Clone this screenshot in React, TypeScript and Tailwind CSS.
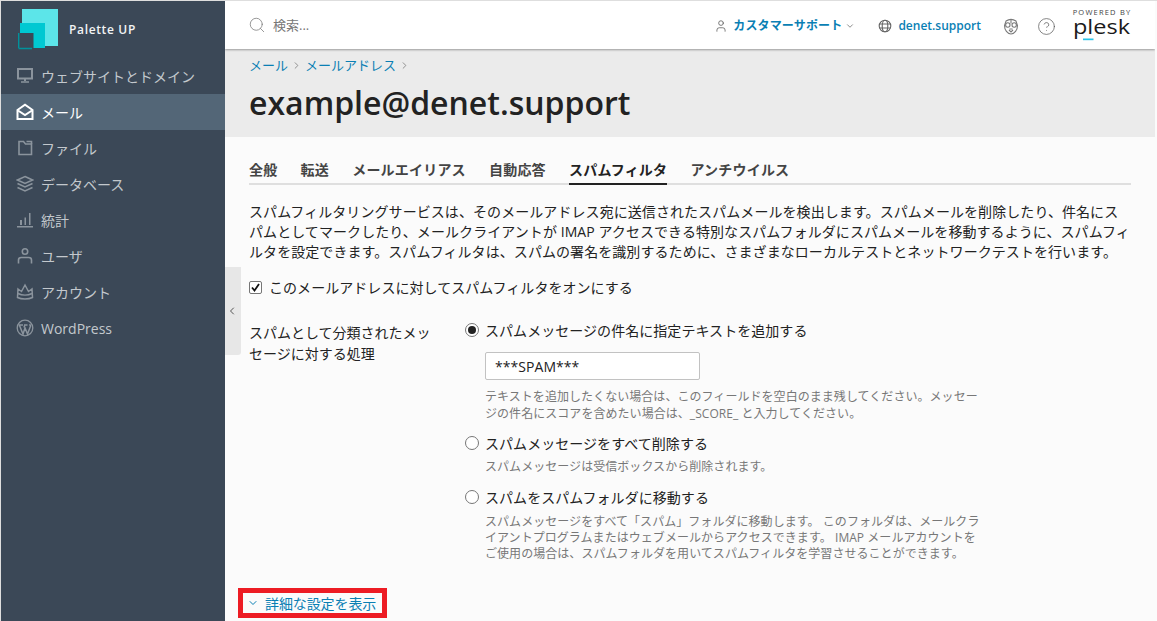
import React from 'react';
import { ChevronDown, ChevronLeft, ChevronRight, CircleHelp, Search, User } from 'lucide-react';

const FONT = { fontFamily: '"Open Sans", "Noto Sans CJK JP", sans-serif' };

const IconMonitor = () => (
  <svg width="18" height="18" viewBox="0 0 18 18" fill="none" stroke="currentColor" strokeWidth="2">
    <rect x="2" y="2" width="14" height="9.500" />
    <path d="M9 12v2" />
    <path d="M5 15h8" strokeWidth="1.500" />
  </svg>
);
const IconMail = () => (
  <svg width="18" height="18" viewBox="0 0 18 18" fill="none" stroke="currentColor" strokeWidth="2">
    <path d="M1.500 7 9 1.800 16.500 7v9h-15z" />
    <path d="m2 7.500 7 4.500 7-4.500" />
  </svg>
);
const IconFolder = () => (
  <svg width="18" height="18" viewBox="0 0 18 18" fill="none" stroke="currentColor" strokeWidth="1.600">
    <path d="M3 2.500h4.500l2 2.500H15.500v10.500H3z" />
    <path d="M10.500 2.500h5v2.500" />
  </svg>
);
const IconStack = () => (
  <svg width="18" height="18" viewBox="0 0 18 18" fill="none" stroke="currentColor" strokeWidth="1.500">
    <path d="M9 1.500 16.500 5 9 8.500 1.500 5z" />
    <path d="M1.500 8.500 9 12l7.500-3.500M1.500 12.500 9 16l7.500-3.500" />
  </svg>
);
const IconBars = () => (
  <svg width="18" height="18" viewBox="0 0 18 18" fill="currentColor">
    <rect x="1" y="15" width="16" height="1.500" />
    <rect x="4" y="9" width="2" height="5" />
    <rect x="8.500" y="6.500" width="1.500" height="7.500" />
    <rect x="13" y="2" width="1.500" height="12" />
  </svg>
);
const IconPerson = () => (
  <svg width="18" height="18" viewBox="0 0 18 18" fill="none" stroke="currentColor" strokeWidth="1.600">
    <circle cx="9" cy="4.500" r="2.700" />
    <path d="M2.500 16.500v-3.500c0-1.500 1.200-2.500 2.800-2.500h7.400c1.600 0 2.800 1 2.800 2.500v3.500" />
  </svg>
);
const IconCrown = () => (
  <svg width="18" height="18" viewBox="0 0 18 18" fill="none" stroke="currentColor" strokeWidth="1.500">
    <path d="M2 6 5.500 8.500 9 2l3.500 6.500L16 6l.5 8.500c-4 2-11 2-15 0z" />
    <path d="M2 10.500c4 2 10 2 14 0" />
  </svg>
);
const IconWordpress = () => (
  <svg width="18" height="18" viewBox="0 0 18 18" fill="none" stroke="currentColor">
    <circle cx="9" cy="9" r="7.800" strokeWidth="1.300" />
    <path d="M3.500 6.500 7 15l2-6 2.500 6 2.700-7c.5-1.400-.1-2.200-.9-2.500M2.800 6h4.200M8 6h3.500M8.800 6 8 8.500" strokeWidth="1.500" />
  </svg>
);
const IconGlobe = () => (
  <svg width="14" height="14" viewBox="0 0 14 14" fill="none" stroke="currentColor" strokeWidth="1.100">
    <circle cx="7" cy="7" r="5.800" />
    <ellipse cx="7" cy="7" rx="2.800" ry="5.800" />
    <path d="M1.500 5h11M1.500 9h11" />
  </svg>
);
const IconBadger = () => (
  <svg width="16" height="17" viewBox="0 0 16 17" fill="none" stroke="#7a7a7a" strokeWidth="1.100">
    <path d="M3 3c3-2 7-2 10 0l1.500 4.500c0 4.500-3 8.500-6.500 8.500S1.500 12 1.500 7.500z" />
    <circle cx="4.800" cy="7" r="2.200" />
    <circle cx="11.200" cy="7" r="2.200" />
    <path d="M8 2v3.500M6 12l2 2 2-2M6.500 11h3" />
  </svg>
);
const PleskLogo = () => (
  <svg width="60" height="36" viewBox="0 0 60 36" className="block">
    <text x="30" y="7.500" textAnchor="middle" fontSize="7.500" letterSpacing="1.200" fill="#444" fontFamily="Open Sans, sans-serif">POWERED BY</text>
    <text x="1" y="27" fontSize="20" fill="#1a1a1a" textLength="57" lengthAdjust="spacingAndGlyphs" fontFamily="Open Sans, sans-serif">plesk</text>
    <rect x="11" y="31.500" width="10.500" height="1.700" fill="#28c4e8" />
  </svg>
);

const navItems = [
  { label: 'ウェブサイトとドメイン', icon: <IconMonitor /> },
  { label: 'メール', icon: <IconMail />, active: true },
  { label: 'ファイル', icon: <IconFolder /> },
  { label: 'データベース', icon: <IconStack /> },
  { label: '統計', icon: <IconBars /> },
  { label: 'ユーザ', icon: <IconPerson /> },
  { label: 'アカウント', icon: <IconCrown /> },
  { label: 'WordPress', icon: <IconWordpress /> },
];

const tabs = ['全般', '転送', 'メールエイリアス', '自動応答', 'スパムフィルタ', 'アンチウイルス'];

const Radio = ({ checked }: { checked?: boolean }) => (
  <span className="flex h-[14px] w-[14px] shrink-0 items-center justify-center rounded-full border border-[#767676] bg-white">
    {checked && <span className="h-[8px] w-[8px] rounded-full bg-[#222]" />}
  </span>
);

const Sidebar = () => (
  <aside className="flex w-[224px] shrink-0 flex-col bg-[#3b4857]">
    <div className="flex h-[57px] items-start pl-[17px] pt-[7px]">
      <svg width="42" height="42" viewBox="0 0 42 42">
        <rect x="4" y="1" width="36" height="37" fill="#5ce5e9" />
        <rect x="2" y="15" width="25" height="25" fill="#00c8d2" />
        <rect x="0.500" y="25" width="15" height="16" fill="#3b4857" />
        <path d="M0.700 40V25M0.500 40.500H14" stroke="#00929c" strokeWidth="1.400" fill="none" />
      </svg>
      <span className="ml-[9px] mt-[13px] text-[12px] leading-[18px] font-semibold tracking-[0.65px] text-[#f2f4f5]">Palette UP</span>
    </div>
    <nav className="flex flex-col">
      {navItems.map(item => (
        <div
          key={item.label}
          className={`flex h-9 items-center pl-[15px] text-[14px] ${item.active ? 'bg-[#536677] text-white' : 'text-[#c3c8cd]'}`}
        >
          <span className={`mr-[7px] ${item.active ? 'text-white' : 'text-[#8b949d]'}`}>{item.icon}</span>
          {item.label}
        </div>
      ))}
    </nav>
  </aside>
);

const Header = () => (
  <header className="relative z-10 flex h-[48px] shrink-0 items-center bg-white pl-[23px] pr-[23px] pt-[2px] shadow-[0_1px_2px_rgba(0,0,0,0.35)]">
    <Search size={18} strokeWidth={1} className="-mt-[2px] text-[#777]" />
    <span className="ml-[7px] text-[13px] text-[#777]">検索...</span>
    <div className="ml-auto flex items-center">
      <User size={14} strokeWidth={1.300} className="text-[#555]" />
      <span className="ml-[5px] text-[12px] font-semibold tracking-[0.15px] text-[#0a7fb4]">カスタマーサポート</span>
      <ChevronDown size={10} className="ml-[3px] text-[#777]" />
      <span className="ml-[23px] text-[#666]"><IconGlobe /></span>
      <span className="ml-[6px] text-[12px] font-semibold text-[#0a7fb4]">denet.support</span>
      <span className="ml-[22px]"><IconBadger /></span>
      <CircleHelp size={19} strokeWidth={0.900} className="ml-[18px] text-[#555]" />
      <div className="-mt-[2px] ml-[16px]">
        <PleskLogo />
      </div>
    </div>
  </header>
);

const PageTitle = () => (
  <div className="h-[88px] shrink-0 bg-[#ebebeb] pl-[24px]">
    <div className="flex items-center pt-[6px] text-[13px] leading-[20px] text-[#0a7fb4]">
      <span>メール</span>
      <ChevronRight size={11} className="mx-[3px] text-[#888]" />
      <span>メールアドレス</span>
      <ChevronRight size={11} className="ml-[3px] text-[#888]" />
    </div>
    <h1 className="mt-[6px] text-[32px] leading-[44px] font-semibold text-[#222]">example@denet.support</h1>
  </div>
);

const Content = () => (
  <main className="relative flex-1 bg-[#fbfbfb] pl-[24px] pr-[24px]">
    <div className="mt-[22px] flex h-[26px] gap-[23.2px] border-b-2 border-[#dfdfdf] text-[14px] font-semibold tracking-[0.2px] text-[#444]">
      {tabs.map(tab => (
        <span
          key={tab}
          className={`-mb-[2px] h-[26px] leading-[22px] ${tab === 'スパムフィルタ' ? 'border-b-2 border-[#222] text-[#222]' : ''}`}
        >
          {tab}
        </span>
      ))}
    </div>
    <p className="mt-[17px] text-[14px] leading-[20px] tracking-[0.07px] text-[#222]">
      スパムフィルタリングサービスは、そのメールアドレス宛に送信されたスパムメールを検出します。スパムメールを削除したり、件名にスパムとしてマークしたり、メールクライアントが IMAP アクセスできる特別なスパムフォルダにスパムメールを移動するように、スパムフィルタを設定できます。スパムフィルタは、スパムの署名を識別するために、さまざまなローカルテストとネットワークテストを行います。
    </p>
    <label className="mt-[15px] flex h-[20px] items-center text-[14px] tracking-[0.05px] text-[#222]">
      <span className="flex h-[13px] w-[13px] items-center justify-center rounded-[2px] border border-[#767676] bg-white">
        <svg width="9" height="9" viewBox="0 0 9 9" fill="none" stroke="#111" strokeWidth="1.800">
          <path d="M1 4.500 3.500 7.500 8 1" />
        </svg>
      </span>
      <span className="ml-[7px]">このメールアドレスに対してスパムフィルタをオンにする</span>
    </label>
    <div className="mt-[23px] flex">
      <div className="w-[216px] shrink-0 pr-[29px] pt-[2px] text-[14px] leading-[21px] text-[#222]">
        スパムとして分類されたメッセージに対する処理
      </div>
      <div className="w-[516px] text-[14px] tracking-[0.05px] text-[#222]">
        <div className="flex h-[20px] items-center gap-[6px]">
          <Radio checked />
          <span>スパムメッセージの件名に指定テキストを追加する</span>
        </div>
        <div className="ml-[20px] mt-[12px] flex h-[28px] w-[215px] items-center rounded-[2px] border border-[#c2c2c2] bg-white pl-[9px] text-[14px]">***SPAM***</div>
        <p className="ml-[20px] mt-[8px] text-[12px] leading-[17px] text-[#777]">
          テキストを追加したくない場合は、このフィールドを空白のまま残してください。メッセージの件名にスコアを含めたい場合は、_SCORE_ と入力してください。
        </p>
        <div className="mt-[11px] flex h-[20px] items-center gap-[6px]">
          <Radio />
          <span>スパムメッセージをすべて削除する</span>
        </div>
        <p className="ml-[20px] mt-[5px] text-[12px] leading-[17px] text-[#777]">スパムメッセージは受信ボックスから削除されます。</p>
        <div className="mt-[12px] flex h-[20px] items-center gap-[6px]">
          <Radio />
          <span>スパムをスパムフォルダに移動する</span>
        </div>
        <p className="ml-[20px] mt-[7px] text-[12px] leading-[16px] text-[#777]">
          スパムメッセージをすべて「スパム」フォルダに移動します。 このフォルダは、メールクライアントプログラムまたはウェブメールからアクセスできます。 IMAP メールアカウントをご使用の場合は、スパムフォルダを用いてスパムフィルタを学習させることができます。
        </p>
      </div>
    </div>
    <div className="-ml-[11px] mt-[26px] flex h-[30px] w-[149px] items-center gap-[6px] border-[5px] border-[#ed1c24] pl-[4px] text-[14px] tracking-[-0.1px] text-[#0a7fb4]">
      <ChevronDown size={12} />
      <span>詳細な設定を表示</span>
    </div>
    <div className="absolute left-0 top-[130px] flex h-[88px] w-[16px] items-center justify-center rounded-br-[3px] bg-[#e7e7e7] pr-[2px]">
      <ChevronLeft size={12} strokeWidth={1.800} className="text-[#444]" />
    </div>
  </main>
);

export default function App() {
  return (
    <div className="flex h-[621px] overflow-hidden border-l border-t border-[#dedede] bg-[#fbfbfb] pr-[2px]" style={FONT}>
      <Sidebar />
      <div className="flex min-w-0 flex-1 flex-col overflow-hidden">
        <Header />
        <PageTitle />
        <Content />
      </div>
    </div>
  );
}
